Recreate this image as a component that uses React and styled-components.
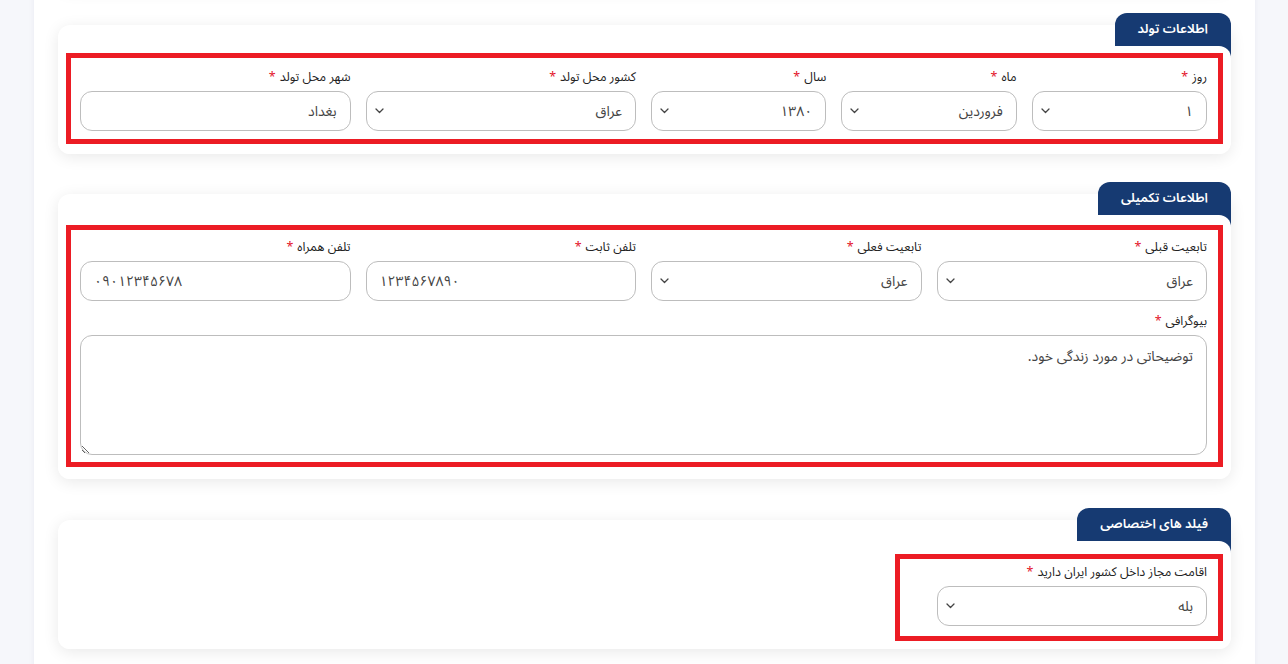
import React from "react";
import styled, { createGlobalStyle } from "styled-components";

const GlobalStyle = createGlobalStyle`
  body {
    margin: 0;
    background: #f6f7fb;
    font-family: "Noto Sans Arabic", "DejaVu Sans", "Noto Sans", sans-serif;
  }
  * {
    box-sizing: border-box;
  }
`;

const Page = styled.div`
  direction: rtl;
  padding: 0 33px 0 34px;
  height: 664px;
  overflow: hidden;
`;

const Panel = styled.div`
  background: #fff;
  min-height: 100%;
  padding: 0 24px 40px;
  box-shadow: 0 0 6px rgba(30, 40, 80, 0.06);
`;

const PrevCard = styled.div`
  height: 60px;
  margin-top: -72px;
  background: #fff;
  border-radius: 12px;
  box-shadow: 0 3px 16px rgba(0, 0, 0, 0.09);
`;

const Card = styled.section`
  background: #fff;
  border-radius: 12px;
  box-shadow: 0 3px 16px rgba(0, 0, 0, 0.09);
  margin-top: ${(p) => p.$top}px;
`;

const TabRow = styled.div`
  display: flex;
  align-items: flex-start;
  height: 21px;
`;

const Tab = styled.div`
  margin-top: -12px;
  height: 45px;
  padding: 0 23px;
  line-height: 33px;
  background: #163a72;
  color: #fff;
  font-size: 13px;
  font-weight: 600;
  border-radius: 12px 12px 0 0;
  white-space: nowrap;
`;

const Body = styled.div`
  position: relative;
  background: #fff;
  border-radius: 12px;
  border-top-left-radius: 0;
  padding: ${(p) => p.$pad};
`;

const Highlight = styled.div`
  border: 5px solid #ec1c24;
  padding: ${(p) => p.$pad};
  width: ${(p) => p.$width || "auto"};
`;

const Grid = styled.div`
  display: grid;
  grid-template-columns: repeat(12, 1fr);
  column-gap: 15px;
  row-gap: 10px;
`;

const Field = styled.div`
  grid-column: span ${(p) => p.$span};
  display: flex;
  flex-direction: column;
`;

const Label = styled.label`
  font-size: 12.5px;
  line-height: 20px;
  color: #222;
  margin-bottom: 4px;
`;

const Star = styled.span`
  color: #e3132b;
  margin-right: 4px;
`;

const Input = styled.input`
  height: 40px;
  width: 100%;
  border: 1px solid #bdbdbd;
  border-radius: 12px;
  padding: 0 13px;
  font-family: inherit;
  font-size: 14px;
  color: #444;
  background: #fff;
  outline: none;
  text-align: ${(p) => (p.dir === "ltr" ? "left" : "right")};
`;

const SelectBox = styled.div`
  height: 40px;
  border: 1px solid #bdbdbd;
  border-radius: 12px;
  padding: 0 13px 0 8px;
  display: flex;
  align-items: center;
  justify-content: space-between;
  font-size: 14px;
  color: #444;
  background: #fff;
`;

const Chevron = styled.svg`
  width: 9px;
  height: 6px;
  flex: none;
`;

const TextArea = styled.textarea`
  height: 120px;
  width: 100%;
  border: 1px solid #bdbdbd;
  border-radius: 12px;
  padding: 10px 13px;
  font-family: inherit;
  font-size: 14px;
  line-height: 22px;
  color: #444;
  outline: none;
  display: block;
`;

const Select = ({ value }) => (
  <SelectBox>
    <span>{value}</span>
    <Chevron viewBox="0 0 9 6">
      <path d="M1 1l3.5 3.5L8 1" fill="none" stroke="#444" strokeWidth="1.3" strokeLinecap="round" strokeLinejoin="round" />
    </Chevron>
  </SelectBox>
);

const FormField = ({ span, label, children }) => (
  <Field $span={span}>
    <Label>
      {label}
      <Star>*</Star>
    </Label>
    {children}
  </Field>
);

export default function App() {
  return (
    <>
      <GlobalStyle />
      <Page>
        <Panel>
          <PrevCard />
          <Card $top={37}>
            <TabRow>
              <Tab>اطلاعات تولد</Tab>
            </TabRow>
            <Body $pad="7px 8px 10px">
              <Highlight $pad="9px 11px 8px 9px">
                <Grid>
                  <FormField span={2} label="روز">
                    <Select value="۱" />
                  </FormField>
                  <FormField span={2} label="ماه">
                    <Select value="فروردین" />
                  </FormField>
                  <FormField span={2} label="سال">
                    <Select value="۱۳۸۰" />
                  </FormField>
                  <FormField span={3} label="کشور محل تولد">
                    <Select value="عراق" />
                  </FormField>
                  <FormField span={3} label="شهر محل تولد">
                    <Input defaultValue="بغداد" />
                  </FormField>
                </Grid>
              </Highlight>
            </Body>
          </Card>

          <Card $top={40}>
            <TabRow>
              <Tab>اطلاعات تکمیلی</Tab>
            </TabRow>
            <Body $pad="10px 8px 12px">
              <Highlight $pad="7px 11px 7px 9px">
                <Grid>
                  <FormField span={3} label="تابعیت قبلی">
                    <Select value="عراق" />
                  </FormField>
                  <FormField span={3} label="تابعیت فعلی">
                    <Select value="عراق" />
                  </FormField>
                  <FormField span={3} label="تلفن ثابت">
                    <Input dir="ltr" defaultValue="۱۲۳۴۵۶۷۸۹۰" />
                  </FormField>
                  <FormField span={3} label="تلفن همراه">
                    <Input dir="ltr" defaultValue="۰۹۰۱۲۳۴۵۶۷۸" />
                  </FormField>
                  <FormField span={12} label="بیوگرافی">
                    <TextArea defaultValue="توضیحاتی در مورد زندگی خود." />
                  </FormField>
                </Grid>
              </Highlight>
            </Body>
          </Card>

          <Card $top={41}>
            <TabRow>
              <Tab>فیلد های اختصاصی</Tab>
            </TabRow>
            <Body $pad="13px 8px 8px">
              <Highlight $width="328px" $pad="3px 11px 10px 37px">
                <FormField span={12} label="اقامت مجاز داخل کشور ایران دارید">
                  <Select value="بله" />
                </FormField>
              </Highlight>
            </Body>
          </Card>
        </Panel>
      </Page>
    </>
  );
}
